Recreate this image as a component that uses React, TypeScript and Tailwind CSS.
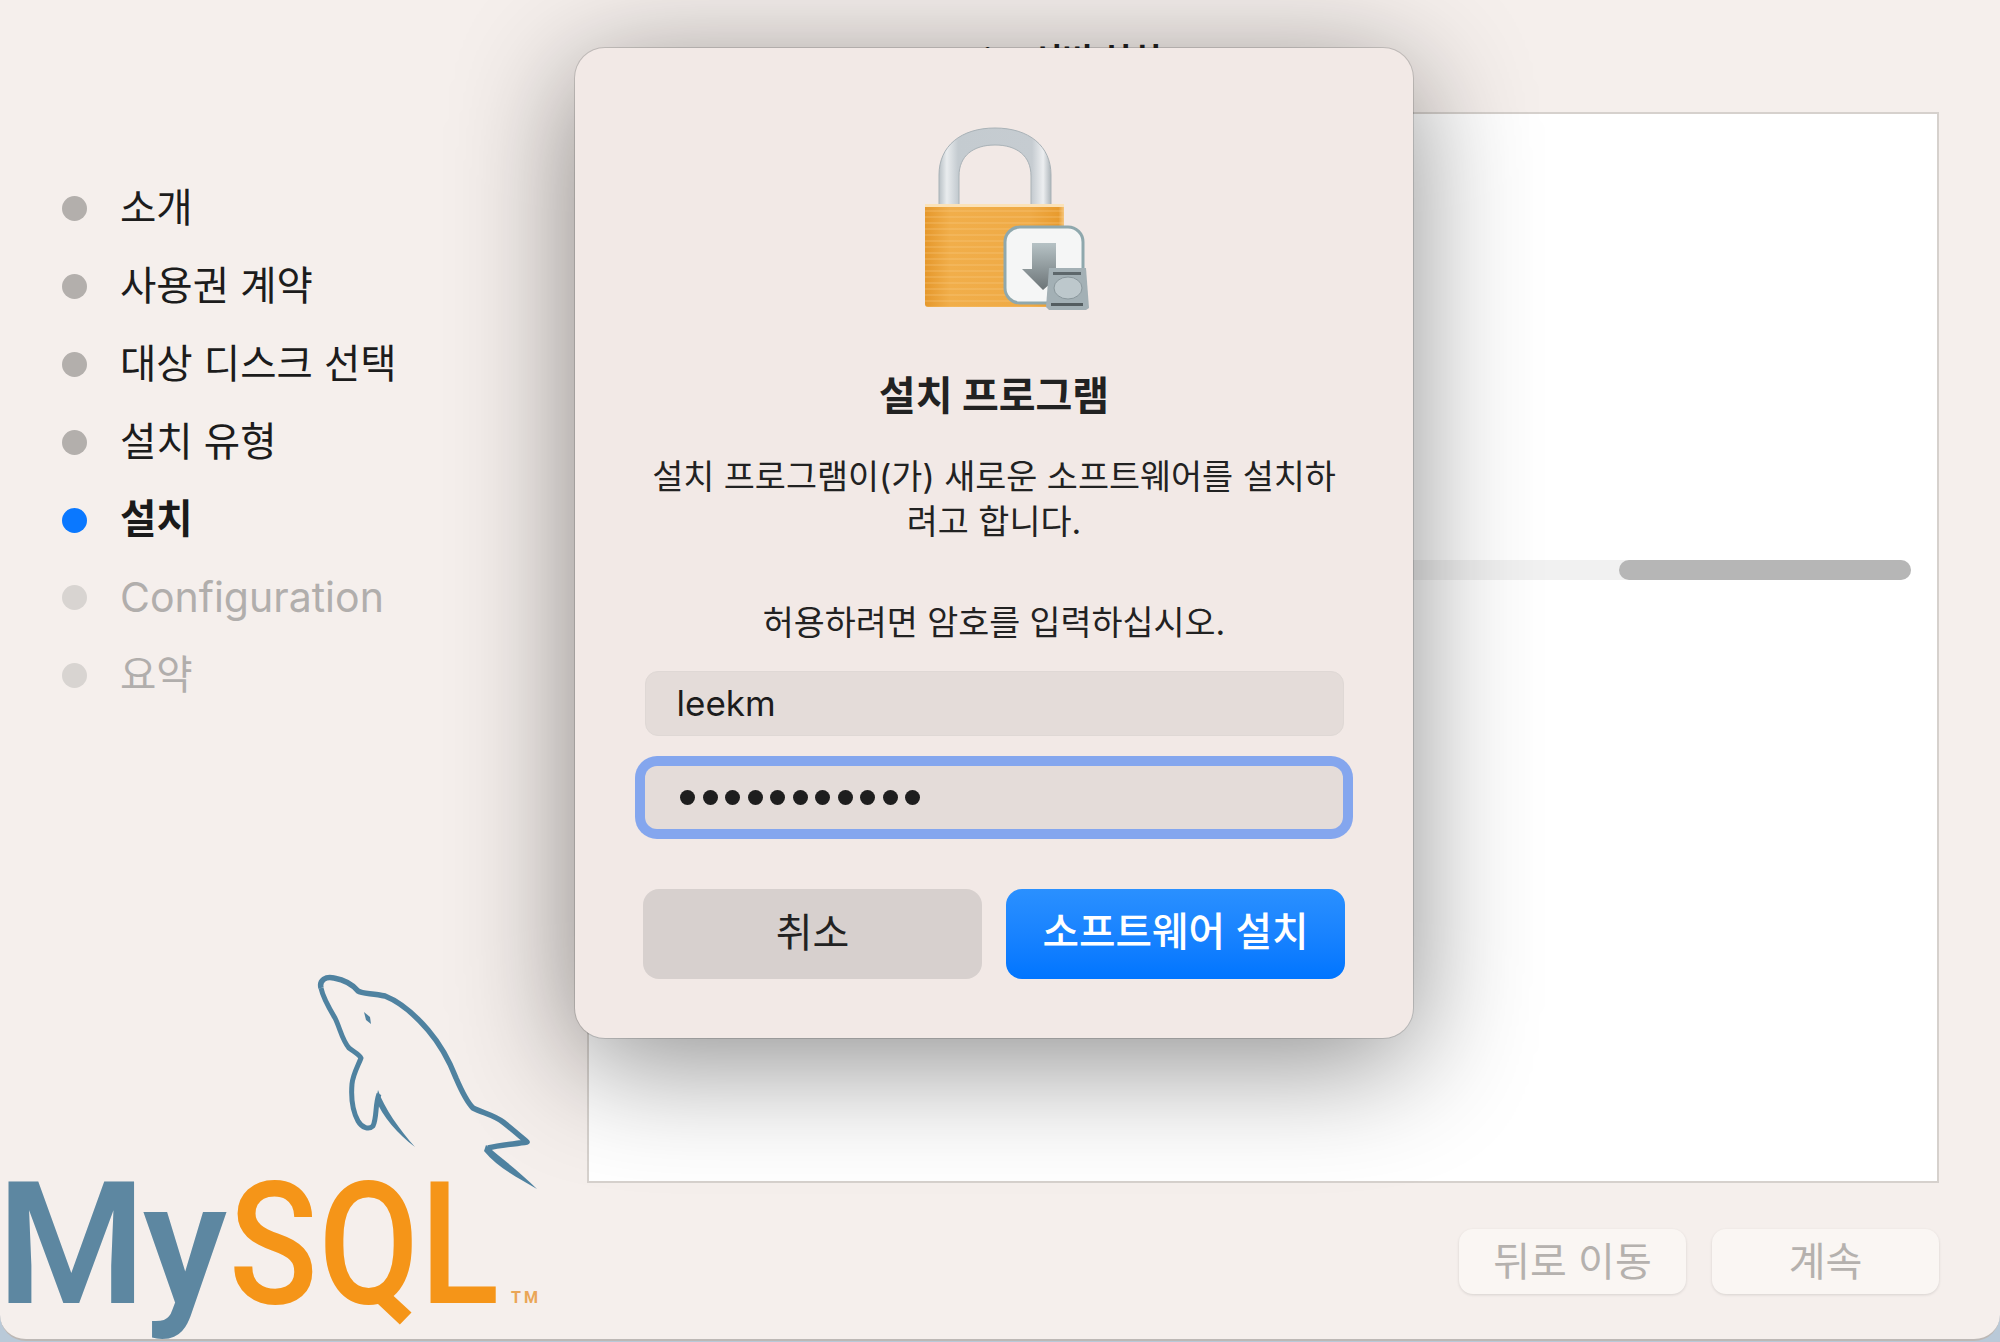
import React from "react";

const CJK = "font-['Inter','Noto_Sans_CJK_KR',sans-serif]";

const steps = [
  { label: "소개", state: "done" },
  { label: "사용권 계약", state: "done" },
  { label: "대상 디스크 선택", state: "done" },
  { label: "설치 유형", state: "done" },
  { label: "설치", state: "active" },
  { label: "Configuration", state: "todo" },
  { label: "요약", state: "todo" },
];

function StepRow({ label, state }: { label: string; state: string }) {
  const dot = state === "active" ? "bg-[#0a78ff]" : state === "done" ? "bg-[#b3afac]" : "bg-[#d8d4d1]";
  const text =
    state === "active"
      ? "text-[#1a1a1a] font-bold"
      : state === "done"
        ? "text-[#1c1c1c]"
        : "text-[#b1aeac]";
  const size = label === "Configuration" ? "text-[41px]" : "text-[39.5px]";
  return (
    <div className="flex h-[77.8px] items-center">
      <span className={`ml-[62px] h-[25px] w-[25px] rounded-full ${dot}`} />
      <span className={`ml-[33px] leading-none whitespace-nowrap ${size} ${text}`}>{label}</span>
    </div>
  );
}

function Dolphin() {
  return (
    <svg viewBox="300 965 260 225" className="ml-[300px] block h-[225px] w-[260px]" fill="none">
      <path
        d="M321 988C319 980 326 976 334 978C345 980 353 985 358 991C362 994 372 993 385 996C400 1002 416 1016 428 1030C440 1044 449 1060 456 1078C462 1092 467 1102 473 1108C483 1113 494 1115 503 1122C512 1129 520 1136 527 1142C515 1144 500 1145 488 1148"
        stroke="#4f82a0"
        strokeWidth="5.5"
        strokeLinejoin="round"
      />
      <path d="M486 1145C500 1157 520 1172 537 1189C520 1179 498 1168 484 1151Z" fill="#4f82a0" />
      <path
        d="M321 988C323 998 329 1008 335 1018C340 1028 342 1040 349 1048C354 1052 359 1054 361 1058C358 1066 353 1074 352 1084C351 1096 352 1110 358 1121C362 1128 369 1130 373 1126C377 1118 375 1104 379 1094"
        stroke="#4f82a0"
        strokeWidth="5"
        strokeLinejoin="round"
      />
      <path d="M378 1090C384 1108 400 1130 415 1147C398 1134 382 1116 376 1100Z" fill="#4f82a0" />
      <path d="M364 1012L370 1017L371 1024L366 1020Z" fill="#4f82a0" />
    </svg>
  );
}

function MysqlLogo() {
  return (
    <div className="h-[374px] shrink-0">
      <Dolphin />
      <div className="mt-[-30px] ml-[-3px] flex items-baseline font-['Roboto',sans-serif] text-[170px] leading-[170px] whitespace-nowrap">
        <span className="font-semibold tracking-[-3px] text-[#5d87a1]">My</span>
        <span className="ml-[5px] inline-block origin-left scale-x-[0.86] font-medium tracking-[1px] text-[#f59518]">SQL</span>
        {/* the scaled span keeps its full layout width, so pull the mark back */}
        <span className="ml-[-33px] text-[16px] leading-none font-bold tracking-[3px] text-[#eaa657]">TM</span>
      </div>
    </div>
  );
}

function LockIcon() {
  return (
    <svg viewBox="0 0 170 190" className="block h-[190px] w-[170px]">
      <defs>
        <linearGradient id="shackle" x1="0" y1="0" x2="1" y2="0">
          <stop offset="0" stopColor="#b9c1c6" />
          <stop offset="0.07" stopColor="#e9ecee" />
          <stop offset="0.17" stopColor="#c4cbd0" />
          <stop offset="0.83" stopColor="#c6ccd1" />
          <stop offset="0.93" stopColor="#eceef0" />
          <stop offset="1" stopColor="#aeb6bb" />
        </linearGradient>
        <linearGradient id="body" x1="0" y1="0" x2="1" y2="0">
          <stop offset="0" stopColor="#e5982c" />
          <stop offset="0.18" stopColor="#f1ae4a" />
          <stop offset="0.75" stopColor="#efaa45" />
          <stop offset="0.96" stopColor="#e89b2e" />
          <stop offset="1" stopColor="#f5c57c" />
        </linearGradient>
        <pattern id="lines" width="4" height="6" patternUnits="userSpaceOnUse">
          <rect width="4" height="2" fill="#f9cf90" opacity="0.22" />
        </pattern>
        <linearGradient id="arrow" x1="0" y1="0" x2="0" y2="1">
          <stop offset="0" stopColor="#b6c2c5" />
          <stop offset="1" stopColor="#6c7477" />
        </linearGradient>
      </defs>
      <path
        d="M18 86V55C18 26 40 8 74 8C108 8 130 26 130 55V86H110V56C110 36 96 25 74 25C52 25 38 36 38 56V86Z"
        fill="url(#shackle)"
        stroke="#a9b2b7"
        strokeWidth="1"
      />
      <rect x="4" y="84" width="139" height="103" rx="3" fill="url(#body)" />
      <rect x="4" y="84" width="139" height="103" rx="3" fill="url(#lines)" />
      <rect x="4" y="84" width="139" height="3" fill="#fbe2b8" />
      <rect x="84" y="107" width="78" height="76" rx="15" fill="#f5f6f6" stroke="#8fa8ad" strokeWidth="3" />
      <path d="M111 123H135V149H146L122 170L101 149H111Z" fill="url(#arrow)" />
      <path d="M128 148H165L168 188L165 190H128L125 187Z" fill="#a3b0b5" />
      <ellipse cx="147" cy="168" rx="14" ry="11" fill="#bdc8cc" stroke="#8a979c" strokeWidth="1" />
      <rect x="132" y="152" width="28" height="3" fill="#5d676b" />
      <rect x="130" y="183" width="32" height="3" fill="#545d60" />
    </svg>
  );
}

function InstallerDialog() {
  return (
    <div className="absolute top-[48px] left-[575px] flex h-[990px] w-[838px] flex-col items-center rounded-[30px] bg-[#f2e9e6] shadow-[0_24px_120px_rgba(0,0,0,0.45),0_0_0_1px_rgba(0,0,0,0.14)]">
      <div className="mt-[72px] ml-[24px]">
        <LockIcon />
      </div>
      <h1 className="mt-[58px] text-[40px] leading-[56px] font-bold text-[#222222]">설치 프로그램</h1>
      <p className="mt-[31px] w-[740px] text-center text-[33.75px] leading-[44.5px] text-[#222222]">
        설치 프로그램이(가) 새로운 소프트웨어를 설치하
        <br />
        려고 합니다.
      </p>
      <p className="mt-[57px] text-[33.7px] leading-[44px] text-[#222222]">허용하려면 암호를 입력하십시오.</p>
      <div className="mt-[26px] flex h-[65px] w-[699px] items-center rounded-[13px] border border-[#dfd8d5] bg-[#e4dcd9] pl-[31px] text-[35px] text-[#1c1c1c]">
        leekm
      </div>
      <div className="mt-[30px] flex h-[63px] w-[698px] items-center gap-[7.5px] rounded-[12px] bg-[#e4dcd9] pl-[35px] shadow-[0_0_0_10px_#84a6ee]">
        {Array.from({ length: 11 }).map((_, i) => (
          <span key={i} className="h-[15px] w-[15px] rounded-full bg-[#1e1e1e]" />
        ))}
      </div>
      <div className="mt-[60px] flex w-[702px] gap-[24px]">
        <button className="h-[90px] w-[339px] rounded-[16px] bg-[#d7d0ce] pb-[3px] text-[40px] text-[#222222]">취소</button>
        <button className="h-[90px] w-[339px] rounded-[16px] bg-gradient-to-b from-[#2a90ff] to-[#0075ff] pb-[3px] text-[39.7px] font-medium text-white">
          소프트웨어 설치
        </button>
      </div>
    </div>
  );
}

export default function App() {
  return (
    <div className={`relative h-[1342px] w-[2000px] overflow-hidden bg-[#b9c9d8] ${CJK}`}>
      <div className="flex h-[1341px] w-full overflow-hidden rounded-b-[26px] border-b-2 border-[#bdb8b5] bg-[#f5efec]">
        <aside className="flex w-[587px] shrink-0 flex-col justify-between pt-[170px]">
          <div>
            {steps.map((s) => (
              <StepRow key={s.label} label={s.label} state={s.state} />
            ))}
          </div>
          <MysqlLogo />
        </aside>
        <main className="flex w-[1352px] flex-col">
          <div className="mt-[37px] h-[75px] pl-[17px] text-[33px] leading-[46px] font-semibold whitespace-nowrap text-[#222222]">
            MySQL 8.0.33 Community 서버 설치
          </div>
          <div className="h-[1071px] border-2 border-[#d6d1cd] bg-white pt-[446px] pr-[26px]">
            <div className="flex h-[20px] w-full justify-end rounded-r-full bg-[#f1f1f1]">
              <div className="h-[20px] w-[292px] rounded-full bg-[#b6b6b6]" />
            </div>
          </div>
          <div className="mt-[46px] flex justify-end gap-[26px]">
            <button className="h-[65px] w-[227px] rounded-[14px] bg-[#faf6f3] text-[40px] text-[#b5b1ae] shadow-[0_1px_3px_rgba(0,0,0,0.12)]">
              뒤로 이동
            </button>
            <button className="h-[65px] w-[227px] rounded-[14px] bg-[#faf6f3] text-[40px] text-[#b5b1ae] shadow-[0_1px_3px_rgba(0,0,0,0.12)]">
              계속
            </button>
          </div>
        </main>
      </div>
      <InstallerDialog />
    </div>
  );
}
